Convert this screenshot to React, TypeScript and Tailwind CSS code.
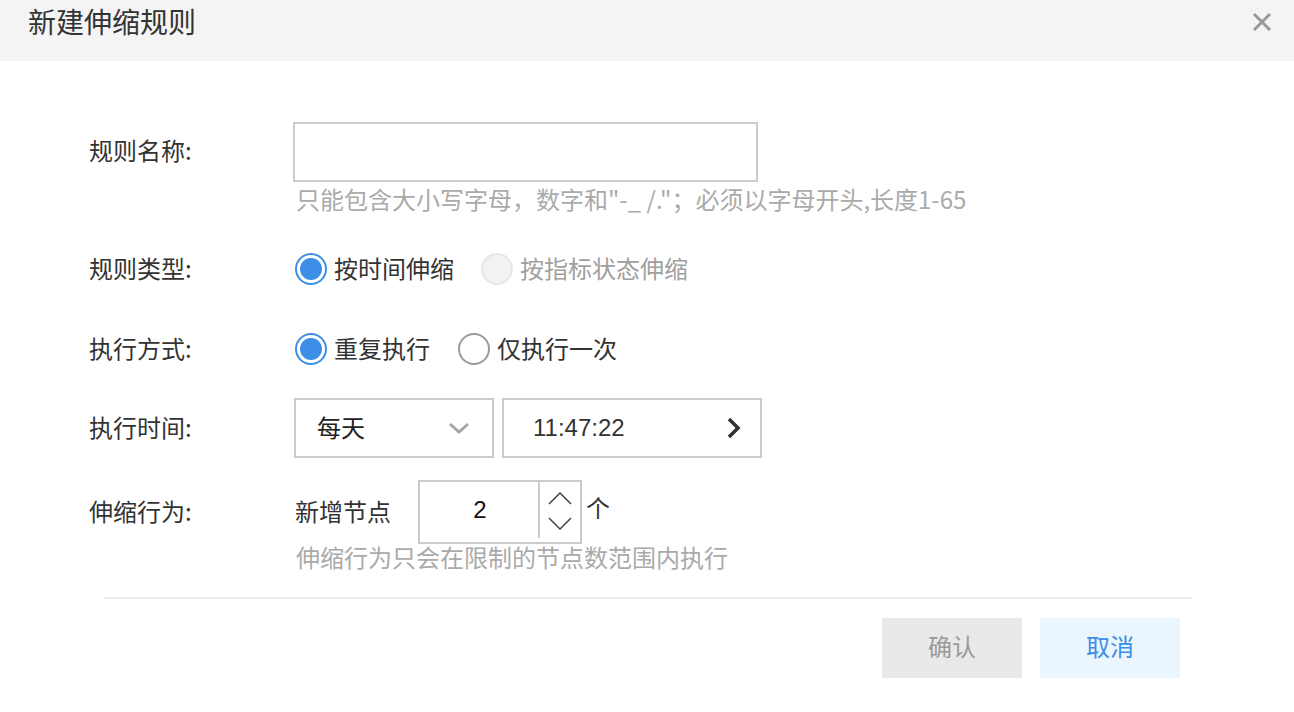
import React, { useState } from "react";

const font = { fontFamily: '"Noto Sans CJK SC", "Noto Sans", sans-serif' };
const latin = { fontFamily: '"Liberation Sans", "Noto Sans CJK SC", sans-serif' };

function Radio({ checked, disabled, label }: { checked?: boolean; disabled?: boolean; label: string }) {
  return (
    <label className="flex items-center cursor-pointer">
      {disabled ? (
        <span className="w-[32px] h-[32px] rounded-full bg-[#f2f2f2] border-2 border-[#e6e6e6]" />
      ) : checked ? (
        <span className="w-[32px] h-[32px] rounded-full border-2 border-[#3d8ee6] flex items-center justify-center">
          <span className="w-[22px] h-[22px] rounded-full bg-[#3d8ee6]" />
        </span>
      ) : (
        <span className="w-[32px] h-[32px] rounded-full border-2 border-[#9a9a9a]" />
      )}
      <span className={"ml-[7px] pb-[3px] text-[24px] " + (disabled ? "text-[#a0a0a0]" : "text-[#333]")}>{label}</span>
    </label>
  );
}

export default function App() {
  const [count, setCount] = useState(2);

  return (
    <div className="w-[1294px] h-[712px] bg-white text-[#333] overflow-hidden" style={font}>
      {/* header */}
      <div className="h-[61px] bg-[#f4f4f4] flex items-start justify-between pl-[28px] pr-[22px]">
        <h1 className="text-[28px] leading-[42px] text-[#333]">新建伸缩规则</h1>
        <svg width="20" height="20" viewBox="0 0 20 20" className="mt-[12px]">
          <path d="M2 2 L18 18 M18 2 L2 18" stroke="#999" strokeWidth="3" />
        </svg>
      </div>

      <div className="pl-[89px] pt-[61px]">
        {/* rule name */}
        <div className="flex">
          <div className="w-[204px] h-[60px] pb-[4px] flex items-center text-[24px]">规则名称:</div>
          <div>
            <input className="w-[465px] h-[60px] border-2 border-[#ccc] outline-none px-3 text-[24px]" />
            <div className="mt-[3px] leading-[28px] text-[24px] text-[#aaa] pl-[3px]">
              只能包含大小写字母，数字和"-_ /."；必须以字母开头,长度1-65
            </div>
          </div>
        </div>

        {/* rule type */}
        <div className="flex items-center h-[40px] mt-[36px]">
          <div className="w-[206px] pb-[3px] text-[24px]">规则类型:</div>
          <div className="flex items-center gap-[27px]">
            <Radio checked label="按时间伸缩" />
            <Radio disabled label="按指标状态伸缩" />
          </div>
        </div>

        {/* exec mode */}
        <div className="flex items-center h-[40px] mt-[40px]">
          <div className="w-[206px] pb-[3px] text-[24px]">执行方式:</div>
          <div className="flex items-center gap-[28px]">
            <Radio checked label="重复执行" />
            <Radio label="仅执行一次" />
          </div>
        </div>

        {/* exec time */}
        <div className="flex items-center mt-[29px]">
          <div className="w-[205px] pb-[3px] text-[24px]">执行时间:</div>
          <div className="flex gap-[8px]">
            <div className="w-[200px] h-[60px] border-2 border-[#ccc] flex items-center justify-between pl-[21px] pr-[22px]">
              <span className="text-[24px] pb-[3px] text-[#222]">每天</span>
              <svg width="22" height="14" viewBox="0 0 22 14">
                <path d="M2 3 L11 11 L20 3" stroke="#a6a6a6" strokeWidth="3" fill="none" />
              </svg>
            </div>
            <div className="w-[260px] h-[60px] border-2 border-[#ccc] flex items-center justify-between pl-[29px] pr-[18px]">
              <span className="text-[24px] text-[#333]" style={latin}>11:47:22</span>
              <svg width="16" height="24" viewBox="0 0 16 24">
                <path d="M3 3 L12 12 L3 21" stroke="#333" strokeWidth="3.6" fill="none" />
              </svg>
            </div>
          </div>
        </div>

        {/* scaling behavior */}
        <div className="flex items-center mt-[22px]">
          <div className="w-[206px] pb-[3px] text-[24px]">伸缩行为:</div>
          <span className="text-[24px] pb-[3px] text-[#333]">新增节点</span>
          <div className="ml-[27px] w-[164px] h-[64px] border-2 border-[#ccc] flex">
            <input
              value={count}
              onChange={(e) => setCount(Number(e.target.value) || 0)}
              className="w-[120px] h-[56px] pl-[2px] text-center text-[24px] text-[#111] outline-none border-r-2 border-[#ccc]"
              style={latin}
            />
            <div className="flex-1 flex flex-col items-center justify-center gap-[12px] pb-[2px]">
              <svg width="24" height="13" viewBox="0 0 24 13" onClick={() => setCount(count + 1)}>
                <path d="M1 12 L12 1 L23 12" stroke="#444" strokeWidth="1.5" fill="none" />
              </svg>
              <svg width="24" height="13" viewBox="0 0 24 13" onClick={() => setCount(Math.max(0, count - 1))}>
                <path d="M1 1 L12 12 L23 1" stroke="#444" strokeWidth="1.5" fill="none" />
              </svg>
            </div>
          </div>
          <span className="ml-[4px] pb-[10px] text-[24px] text-[#333]">个</span>
        </div>
        <div className="pl-[207px] leading-[26px] text-[24px] text-[#aaa]">
          伸缩行为只会在限制的节点数范围内执行
        </div>
      </div>

      {/* footer */}
      <div className="ml-[104px] w-[1088px] h-[2px] bg-[#eee] mt-[27px]" />
      <div className="flex justify-end gap-[18px] mt-[19px] pr-[114px]">
        <button className="w-[140px] h-[60px] pb-[4px] bg-[#e9e9e9] text-[24px] text-[#999]">确认</button>
        <button className="w-[140px] h-[60px] pb-[4px] bg-[#eaf5fd] text-[24px] text-[#3d8ee6]">取消</button>
      </div>
    </div>
  );
}
